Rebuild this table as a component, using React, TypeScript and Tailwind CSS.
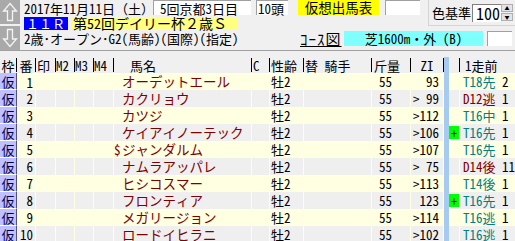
import React from 'react'

type Entry = {
  no: number
  mark?: string
  name: string
  zi: string
  plus?: boolean
  race: string
  dirt?: boolean
  pos: string
}

const entries: Entry[] = [
  { no: 1, name: 'オーデットエール', zi: '93', race: 'T18先', pos: '2' },
  { no: 2, name: 'カクリョウ', zi: '> 99', race: 'D12逃', dirt: true, pos: '1' },
  { no: 3, name: 'カツジ', zi: '>112', race: 'T16中', pos: '1' },
  { no: 4, name: 'ケイアイノーテック', zi: '>106', plus: true, race: 'T16先', pos: '1' },
  { no: 5, mark: '$', name: 'ジャンダルム', zi: '>107', race: 'T16先', pos: '1' },
  { no: 6, name: 'ナムラアッパレ', zi: '> 75', race: 'D14後', dirt: true, pos: '11' },
  { no: 7, name: 'ヒシコスマー', zi: '>113', race: 'T14後', pos: '1' },
  { no: 8, name: 'フロンティア', zi: '123', plus: true, race: 'T16先', pos: '1' },
  { no: 9, name: 'メガリージョン', zi: '>114', race: 'T16逃', pos: '1' },
  { no: 10, name: 'ロードイヒラニ', zi: '>102', race: 'T16逃', pos: '1' },
]

const ArrowButton = ({ down }: { down?: boolean }) => (
  <div className="h-[24px] w-[20px] bg-[#a9a9a9] flex items-center justify-center">
    <svg width="20" height="24" viewBox="0 0 20 24" className={down ? 'rotate-180' : ''}>
      <polygon
        points="10,3.5 16.5,11 12.5,11 12.5,20.5 7.5,20.5 7.5,11 3.5,11"
        fill="none"
        stroke="#f4f4f4"
        strokeWidth="1.3"
      />
    </svg>
  </div>
)

const HeadCell = ({ w, children, cls = '' }: { w: string; children?: React.ReactNode; cls?: string }) => (
  <div className={`${w} h-full flex items-end pb-[1px] shrink-0`}>
    <div className={`h-[14px] w-full border-r border-black flex items-center leading-none ${cls}`}>{children}</div>
  </div>
)

const Row = ({ e }: { e: Entry }) => {
  const bg = e.no % 2 === 1 ? 'bg-[#ffffe1]' : 'bg-[#efefef]'
  const cell = 'h-full shrink-0 border-r border-[#ffffe1]'
  return (
    <div className={`flex h-[17px] leading-[17px] text-[13px] ${bg}`}>
      <div className="w-[17px] h-full shrink-0 bg-[#c0c0ff] border-b border-b-white border-r border-r-[#50507a] text-[#000050] flex items-center justify-center">
        仮
      </div>
      <div className={`w-[19px] ${cell} text-right pr-[2px] ${e.no === 1 ? 'border border-dotted border-[#900000]' : ''}`}>
        {e.no}
      </div>
      <div className={`w-[20px] ${cell}`} />
      <div className={`w-[19px] ${cell}`} />
      <div className={`w-[19px] ${cell}`} />
      <div className={`w-[20px] ${cell}`} />
      <div className={`w-[138px] ${cell} flex text-[#800000]`}>
        <span className="w-[8px] shrink-0">{e.mark}</span>
        <span className="text-[13.5px] whitespace-nowrap">{e.name}</span>
      </div>
      <div className={`w-[18px] ${cell}`} />
      <div className={`w-[34px] ${cell} pl-[1px]`}>牡2</div>
      <div className={`w-[68px] ${cell}`} />
      <div className={`w-[39px] ${cell} pl-[7px]`}>55</div>
      <div className={`w-[33px] ${cell} pr-[4px] text-right whitespace-pre`}>{e.zi}</div>
      <div className="w-[5px] h-full shrink-0 bg-[#a6caf0]" />
      <div className={`w-[11px] ${cell} flex items-center`}>
        {e.plus && (
          <div className="w-[10px] h-[13px] bg-[#00ff00] flex items-center justify-center text-[12px] leading-none">+</div>
        )}
      </div>
      <div className="flex-1 h-full flex whitespace-nowrap">
        <span className={`w-[42px] pl-[3px] ${e.dirt ? 'text-[#800000]' : 'text-[#008080]'}`}>{e.race}</span>
        <span>{e.pos}</span>
      </div>
    </div>
  )
}

export default function App() {
  return (
    <div className="w-[515px] h-[241px] overflow-hidden bg-[#f0f0f0] text-black font-['Noto_Sans_Mono_CJK_JP','Noto_Sans_CJK_JP',monospace]">
      {/* race header */}
      <div className="flex h-[50px]">
        <div className="w-[21px] shrink-0 flex flex-col gap-[2px] pr-[1px]">
          <ArrowButton />
          <ArrowButton down />
        </div>
        <div className="flex-1 pl-[3px]">
          <div className="flex h-[30px]">
            <div className="w-[404px] flex flex-col">
              <div className="flex h-[15px] text-[13px] leading-[15px]">
                <span className="w-[129px] pt-[1px]">2017年11月11日（土）</span>
                <div className="w-[98px] bg-white border-t border-l border-[#a0a0a0] pl-[6px]">5回京都3日目</div>
                <div className="w-[32px] ml-[5px] bg-white border-t border-l border-[#a0a0a0] pl-[1px]">10頭</div>
                <div className="w-[81px] ml-[10px] bg-[#ffff00] text-[13.5px] text-center">仮想出馬表</div>
                <div className="w-[35px] ml-[6px] bg-white border-t border-l border-[#a0a0a0]" />
              </div>
              <div className="flex h-[13px] mt-[2px] text-[13px] leading-[13px]">
                <div className="w-[44px] bg-[#0000ff] text-white pl-[2px]">１１Ｒ</div>
                <div className="w-[165px] ml-[4px] bg-[#ffff80] pl-[1px] text-[14px] whitespace-nowrap">第52回デイリー杯２歳Ｓ</div>
              </div>
            </div>
            <div className="w-[87px] h-[26px] border-l border-b border-[#d4d4d4] flex items-center pl-[3px]">
              <span className="w-[40px] text-[13px]">色基準</span>
              <div className="w-[29px] h-[18px] bg-white border-t border-l border-[#808080] text-[16px] leading-[17px] text-right pr-[1px]">100</div>
              <div className="w-[12px] h-[18px] flex flex-col gap-[1px]">
                <div className="h-[8px] bg-[#e4e4e4] border border-[#b0b0b0] flex items-center justify-center text-[5px] leading-none">▲</div>
                <div className="h-[8px] bg-[#e4e4e4] border border-[#b0b0b0] flex items-center justify-center text-[5px] leading-none">▼</div>
              </div>
            </div>
          </div>
          <div className="flex h-[15px] mt-[1px] text-[13px] leading-[15px]">
            <span className="w-[276px] whitespace-nowrap">2歳･オープン･G2(馬齢)(国際)(指定)</span>
            <span className="w-[44px] text-[15px] underline tracking-[1px]">ｺｰｽ図</span>
            <div className="w-[139px] bg-[#80ffff] text-center">芝1600m・外 (B)</div>
            <div className="w-[25px] ml-[4px] bg-white border-t border-l border-[#a0a0a0]" />
          </div>
        </div>
      </div>

      {/* column titles */}
      <div className="border-t border-[#a0a0a0] flex h-[23px] text-[13px]">
        <HeadCell w="w-[17px]" cls="justify-center">枠</HeadCell>
        <HeadCell w="w-[19px]" cls="justify-center">番</HeadCell>
        <HeadCell w="w-[20px]" cls="pl-[1px]">印</HeadCell>
        <HeadCell w="w-[19px]">M2</HeadCell>
        <HeadCell w="w-[19px]">M3</HeadCell>
        <HeadCell w="w-[20px]">M4</HeadCell>
        <HeadCell w="w-[138px]" cls="pl-[16px]">馬名</HeadCell>
        <HeadCell w="w-[18px]" cls="pl-[1px]">C</HeadCell>
        <HeadCell w="w-[34px]" cls="pl-[1px]">性齢</HeadCell>
        <HeadCell w="w-[68px]" cls="pl-[1px] whitespace-pre">替 騎手</HeadCell>
        <HeadCell w="w-[39px]" cls="pl-[2px]">斤量</HeadCell>
        <HeadCell w="w-[33px]" cls="justify-center">ZI</HeadCell>
        <div className="w-[5px] shrink-0 h-full flex items-end">
          <div className="h-[16px] w-full bg-[#a6caf0]" />
        </div>
        <HeadCell w="w-[11px]" />
        <div className="flex-1 h-full flex items-end pb-[1px]">
          <div className="h-[14px] pl-[5px] flex items-center leading-none">1走前</div>
        </div>
      </div>

      {/* entries */}
      <div>
        {entries.map((e) => (
          <Row key={e.no} e={e} />
        ))}
      </div>
    </div>
  )
}
